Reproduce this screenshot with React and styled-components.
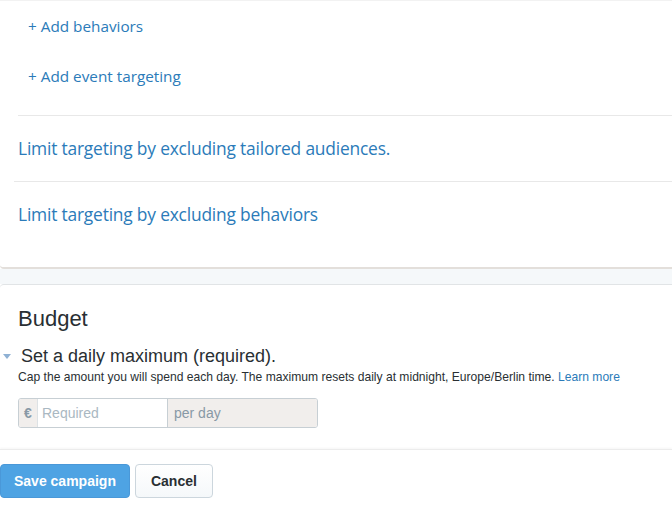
import styled, { createGlobalStyle } from "styled-components"

const Global = createGlobalStyle`
  html, body {
    margin: 0;
    padding: 0;
    background: #ffffff;
  }
  body {
    font-family: "Liberation Sans", Arial, sans-serif;
    color: #292f33;
  }
`

const Page = styled.div`
  width: 672px;
  height: 510px;
  overflow: hidden;
  background: #ffffff;
`

const TopPanel = styled.div`
  background: #fff;
  border-top: 1px solid #f2f2f2;
  border-bottom: 2px solid #e3dfdb;
  border-bottom-left-radius: 4px;
  margin-right: -6px;
`

const AddList = styled.div`
  padding: 6px 0 8px 28px;
  display: flex;
  flex-direction: column;
`

const AddLink = styled.a`
  font-family: "Open Sans", sans-serif;
  font-size: 15.3px;
  color: #2b7bb9;
  height: 50px;
  line-height: 38px;
  text-decoration: none;
`

const Rule = styled.div`
  height: 1px;
  background: #e8e8e8;
  margin-left: ${p => p.$inset}px;
`

const LimitRow = styled.a`
  display: block;
  font-family: "Open Sans", sans-serif;
  font-size: 17.4px;
  color: #2b7bb9;
  padding: 0 0 0 18px;
  height: ${p => p.$h}px;
  line-height: 64px;
  text-decoration: none;
  letter-spacing: -0.2px;
`

const Gap = styled.div`
  height: 15px;
  background: #f5f8fa;
`

const BudgetPanel = styled.div`
  background: #fff;
  border-top: 1px solid #e1e4e6;
  border-top-left-radius: 4px;
  padding: 20px 0 0 0;
  height: 165px;
  box-sizing: border-box;
`

const Title = styled.h2`
  margin: 0 0 0 18px;
  font-size: 22px;
  font-weight: normal;
  line-height: 28px;
  color: #292f33;
`

const Toggle = styled.div`
  display: flex;
  align-items: center;
  margin-top: 12px;
  height: 22px;
`

const Caret = styled.span`
  width: 0;
  height: 0;
  border-left: 4px solid transparent;
  border-right: 4px solid transparent;
  border-top: 5px solid #8fb1d4;
  margin: 0 10px 0 3px;
`

const ToggleLabel = styled.span`
  font-size: 18px;
  color: #292f33;
`

const Help = styled.p`
  margin: 2px 0 0 18px;
  font-size: 12.1px;
  line-height: 16px;
  color: #292f33;
  a {
    color: #2b7bb9;
    text-decoration: none;
  }
`

const InputGroup = styled.div`
  display: flex;
  margin: 13px 0 0 18px;
  width: 300px;
  height: 30px;
  border: 1px solid #c7cfd4;
  border-radius: 3px;
  box-sizing: border-box;
  overflow: hidden;
`

const Addon = styled.span`
  display: flex;
  align-items: center;
  background: #f1eeec;
  color: #8899a6;
  font-size: 14px;
  padding: 0 ${p => p.$pad}px;
  width: ${p => p.$w}px;
  flex: none;
  box-sizing: border-box;
  font-weight: ${p => (p.$bold ? "bold" : "normal")};
  border-left: ${p => (p.$divider ? "1px solid #c7cfd4" : "none")};
  border-right: ${p => (p.$divider ? "none" : "1px solid #dde2e5")};
`

const Field = styled.input`
  border: none;
  outline: none;
  flex: 1;
  min-width: 0;
  padding: 0 4px;
  font-family: "Liberation Sans", Arial, sans-serif;
  font-size: 14px;
  color: #292f33;
  &::placeholder {
    color: #aab8c2;
  }
`

const Footer = styled.div`
  border-top: 1px solid #ececec;
  box-shadow: 0 -1px 2px rgba(0, 0, 0, 0.04);
  padding: 14px 0 0 0;
  display: flex;
  gap: 5px;
`

const Button = styled.button`
  height: 34px;
  padding: 0 ${p => (p.$primary ? 13 : 15)}px;
  border-radius: 4px;
  font-family: "Liberation Sans", Arial, sans-serif;
  font-size: 14px;
  font-weight: bold;
  cursor: pointer;
  border: 1px solid ${p => (p.$primary ? "#4a98d8" : "#ccd6dd")};
  color: ${p => (p.$primary ? "#ffffff" : "#292f33")};
  background: ${p =>
    p.$primary ? "#4ea3e3" : "linear-gradient(#ffffff, #f5f8fa)"};
`

export default function App() {
  return (
    <Page>
      <Global />
      <TopPanel>
        <AddList>
          <AddLink href="#">+ Add behaviors</AddLink>
          <AddLink href="#">+ Add event targeting</AddLink>
        </AddList>
        <Rule $inset={18} />
        <LimitRow href="#" $h={65}>Limit targeting by excluding tailored audiences.</LimitRow>
        <Rule $inset={14} />
        <LimitRow href="#" $h={85}>Limit targeting by excluding behaviors</LimitRow>
      </TopPanel>
      <Gap />
      <BudgetPanel>
        <Title>Budget</Title>
        <Toggle>
          <Caret />
          <ToggleLabel>Set a daily maximum (required).</ToggleLabel>
        </Toggle>
        <Help>
          Cap the amount you will spend each day. The maximum resets daily at midnight, Europe/Berlin time.{" "}
          <a href="#">Learn more</a>
        </Help>
        <InputGroup>
          <Addon $w={19} $pad={5} $bold>€</Addon>
          <Field placeholder="Required" />
          <Addon $w={150} $pad={6} $divider>per day</Addon>
        </InputGroup>
      </BudgetPanel>
      <Footer>
        <Button $primary>Save campaign</Button>
        <Button>Cancel</Button>
      </Footer>
    </Page>
  )
}
